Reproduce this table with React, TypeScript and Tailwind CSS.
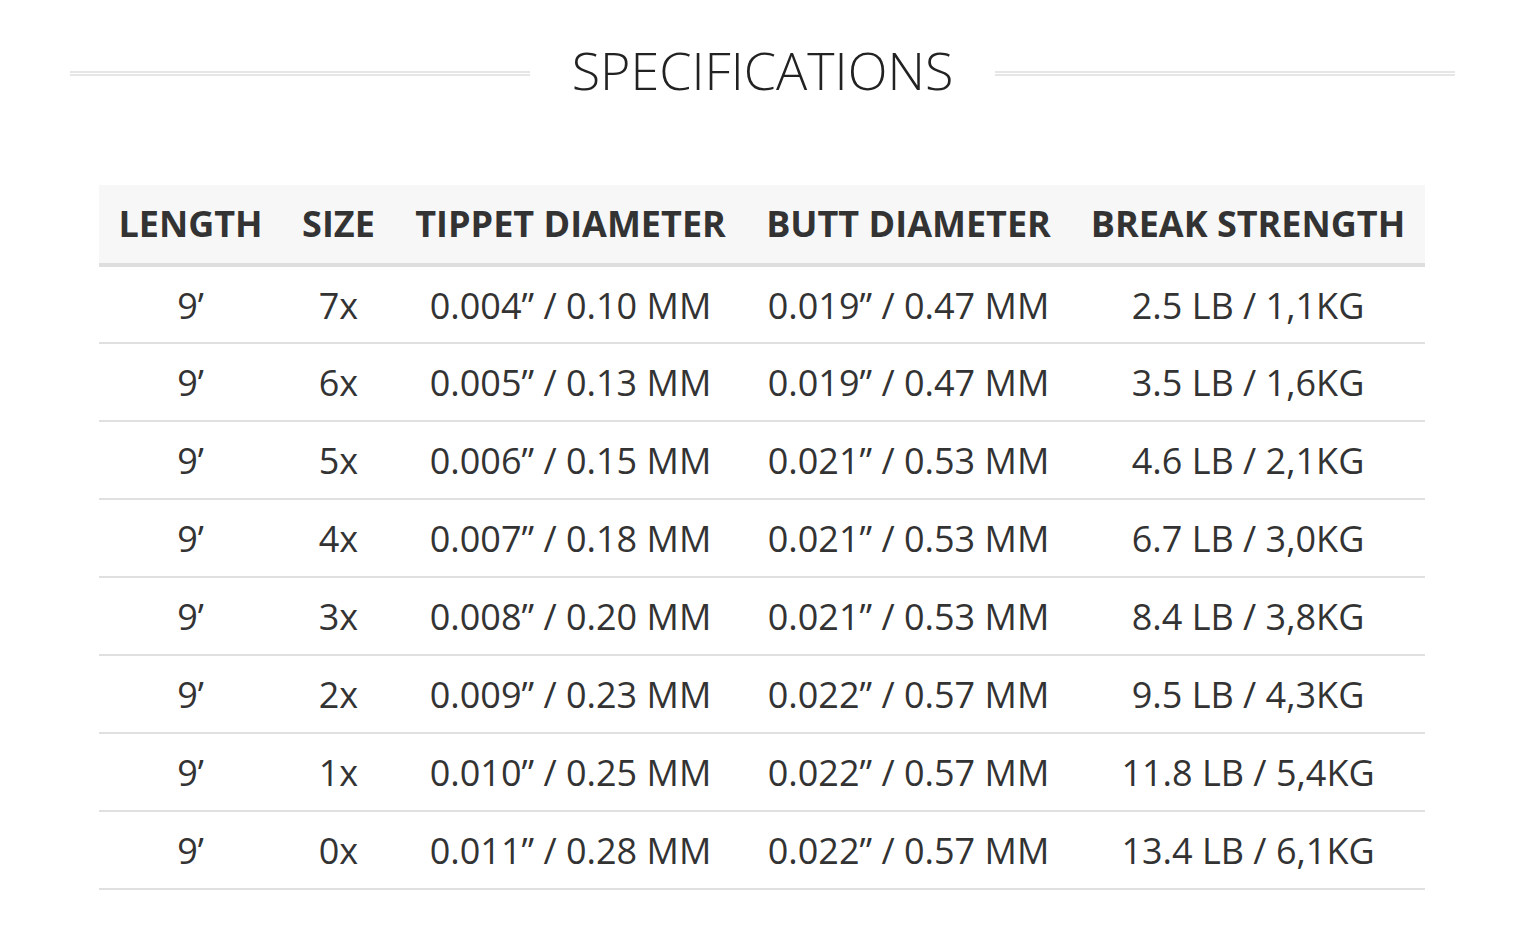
const rows = [
  ["9’", "7x", "0.004” / 0.10 MM", "0.019” / 0.47 MM", "2.5 LB / 1,1KG"],
  ["9’", "6x", "0.005” / 0.13 MM", "0.019” / 0.47 MM", "3.5 LB / 1,6KG"],
  ["9’", "5x", "0.006” / 0.15 MM", "0.021” / 0.53 MM", "4.6 LB / 2,1KG"],
  ["9’", "4x", "0.007” / 0.18 MM", "0.021” / 0.53 MM", "6.7 LB / 3,0KG"],
  ["9’", "3x", "0.008” / 0.20 MM", "0.021” / 0.53 MM", "8.4 LB / 3,8KG"],
  ["9’", "2x", "0.009” / 0.23 MM", "0.022” / 0.57 MM", "9.5 LB / 4,3KG"],
  ["9’", "1x", "0.010” / 0.25 MM", "0.022” / 0.57 MM", "11.8 LB / 5,4KG"],
  ["9’", "0x", "0.011” / 0.28 MM", "0.022” / 0.57 MM", "13.4 LB / 6,1KG"],
]

const headers = ["LENGTH", "SIZE", "TIPPET DIAMETER", "BUTT DIAMETER", "BREAK STRENGTH"]

export default function App() {
  return (
    <div className="min-h-[950px] w-[1514px] bg-white font-['Open_Sans',sans-serif] text-[#333]">
      <div className="ml-[70px] flex w-[1385px] items-center gap-[42px] pt-[36px]">
        <div className="mt-[6px] h-[5px] flex-1 border-y-2 border-[#e6e6e6]" />
        <h2 className="text-[52px] font-light leading-[68px] text-[#222]">SPECIFICATIONS</h2>
        <div className="mt-[6px] h-[5px] flex-1 border-y-2 border-[#e6e6e6]" />
      </div>

      <table className="mt-[81px] ml-[99px] w-[1326px] table-fixed border-collapse text-center">
        <colgroup>
          <col className="w-[183px]" />
          <col className="w-[113px]" />
          <col className="w-[351px]" />
          <col className="w-[325px]" />
          <col className="w-[354px]" />
        </colgroup>
        <thead>
          <tr className="h-[80px] border-b-4 border-[#dedede] bg-[#f7f7f7]">
            {headers.map((h) => (
              <th key={h} className="whitespace-nowrap px-0 text-[36px] font-bold text-[#333]">
                {h}
              </th>
            ))}
          </tr>
        </thead>
        <tbody>
          {rows.map((r, i) => (
            <tr key={i} className="h-[78px] border-b-2 border-[#e0e0e0]">
              {r.map((c, j) => (
                <td key={j} className="whitespace-nowrap pt-[2px] text-[36px] text-[#333]">
                  {c}
                </td>
              ))}
            </tr>
          ))}
        </tbody>
      </table>
    </div>
  )
}
